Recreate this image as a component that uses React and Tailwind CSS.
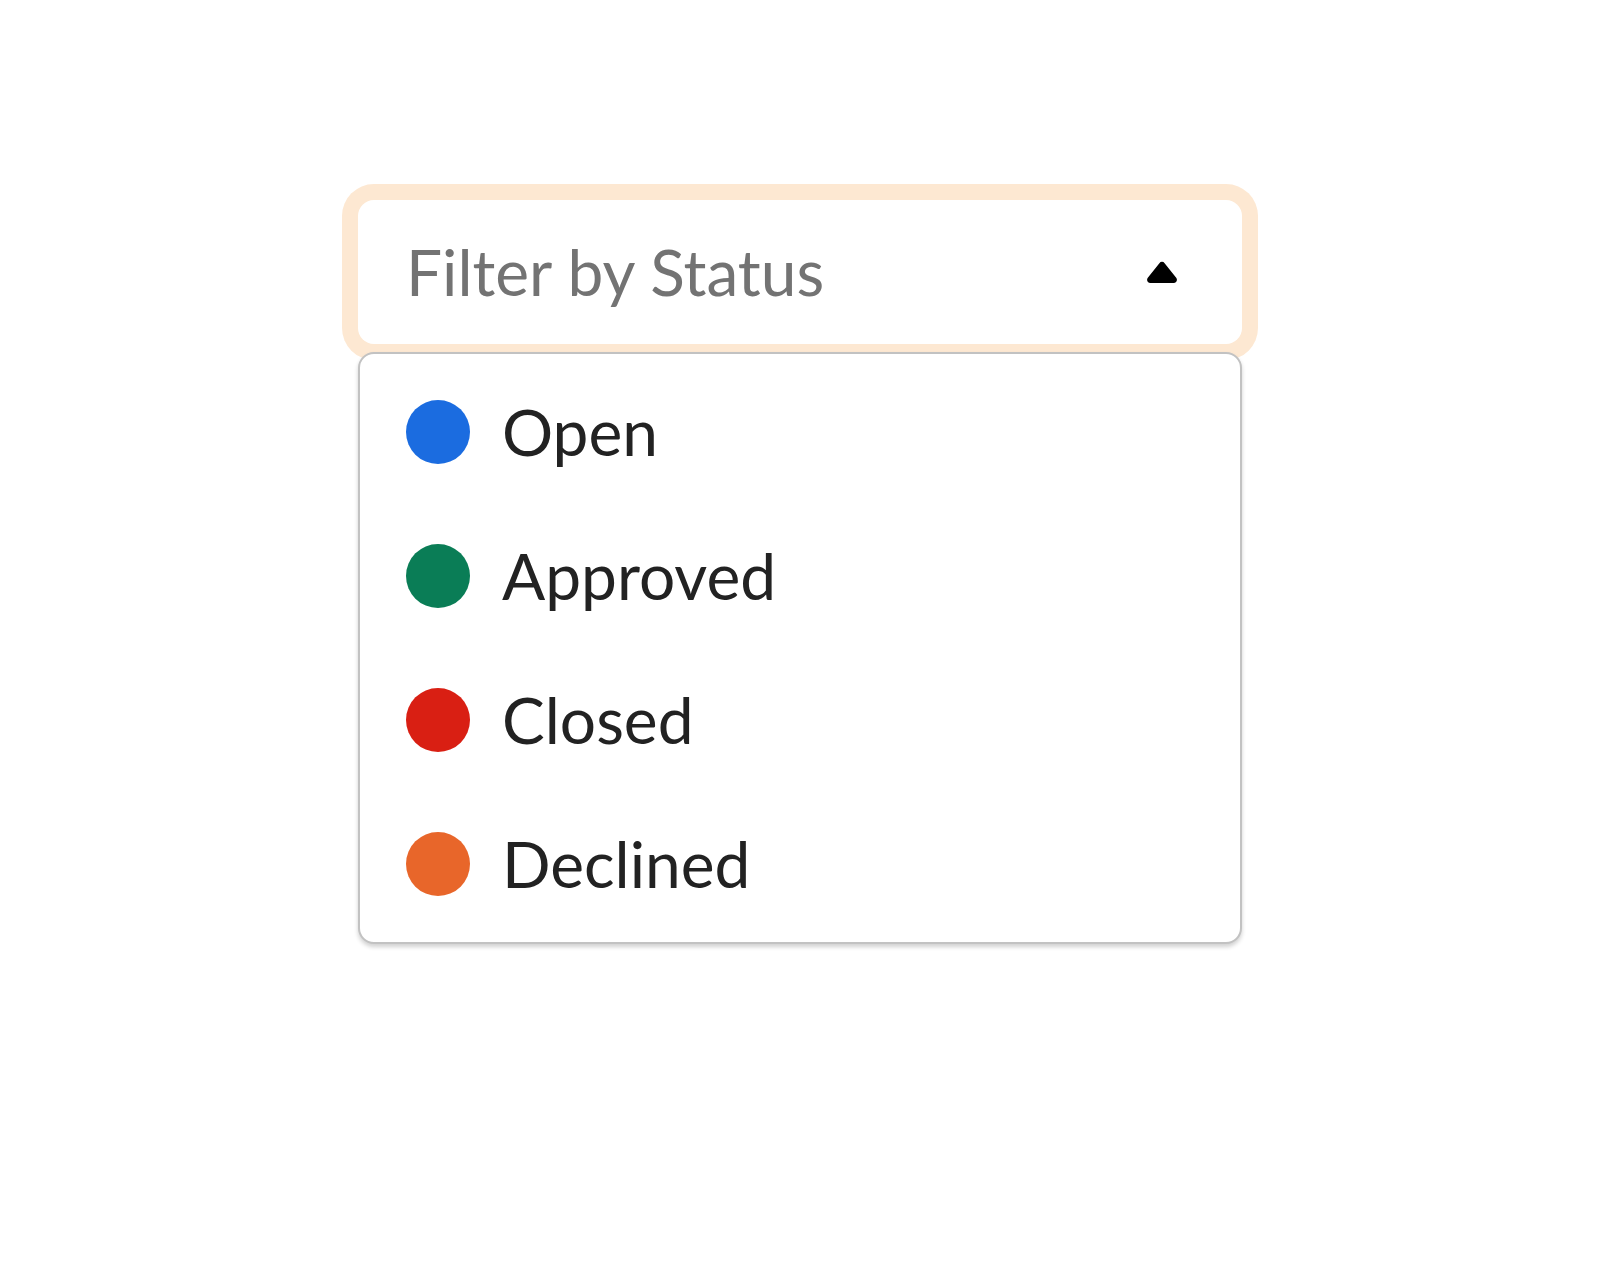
const statuses = [
  { label: 'Open', color: 'bg-[#1b6ce0]' },
  { label: 'Approved', color: 'bg-[#0a7d56]' },
  { label: 'Closed', color: 'bg-[#d91f13]' },
  { label: 'Declined', color: 'bg-[#e8662a]' },
]

export default function App() {
  return (
    <div className="min-h-screen bg-white pt-[184px] flex justify-center font-['Lato',sans-serif]">
      <div className="relative w-[916px]">
        {/* focus ring + trigger */}
        <div className="rounded-[32px] bg-[#fde8d2] p-4">
          <button className="w-full h-[144px] rounded-2xl bg-white flex items-center justify-between pl-12 pr-16 text-left">
            <span className="text-[64px] leading-none text-[#737373]">Filter by Status</span>
            <svg width="32" height="22" viewBox="0 0 32 22" className="block">
              <path d="M13.4 2.2a3.2 3.2 0 0 1 5.2 0l11.6 14.6c1.7 2.1.2 5.2-2.5 5.2H4.3c-2.7 0-4.2-3.1-2.5-5.2z" fill="#000" />
            </svg>
          </button>
        </div>

        {/* menu */}
        <ul className="absolute left-4 right-4 top-[168px] rounded-2xl border-2 border-[#c2c2c2] bg-white py-[6px] shadow-[0_3px_4px_rgba(0,0,0,0.18)]">
          {statuses.map((s) => (
            <li key={s.label} className="h-[144px] flex items-center gap-8 pl-[46px]">
              <span className={`w-16 h-16 rounded-full ${s.color}`} />
              <span className="text-[64px] leading-none text-[#222]">{s.label}</span>
            </li>
          ))}
        </ul>
      </div>
    </div>
  )
}
